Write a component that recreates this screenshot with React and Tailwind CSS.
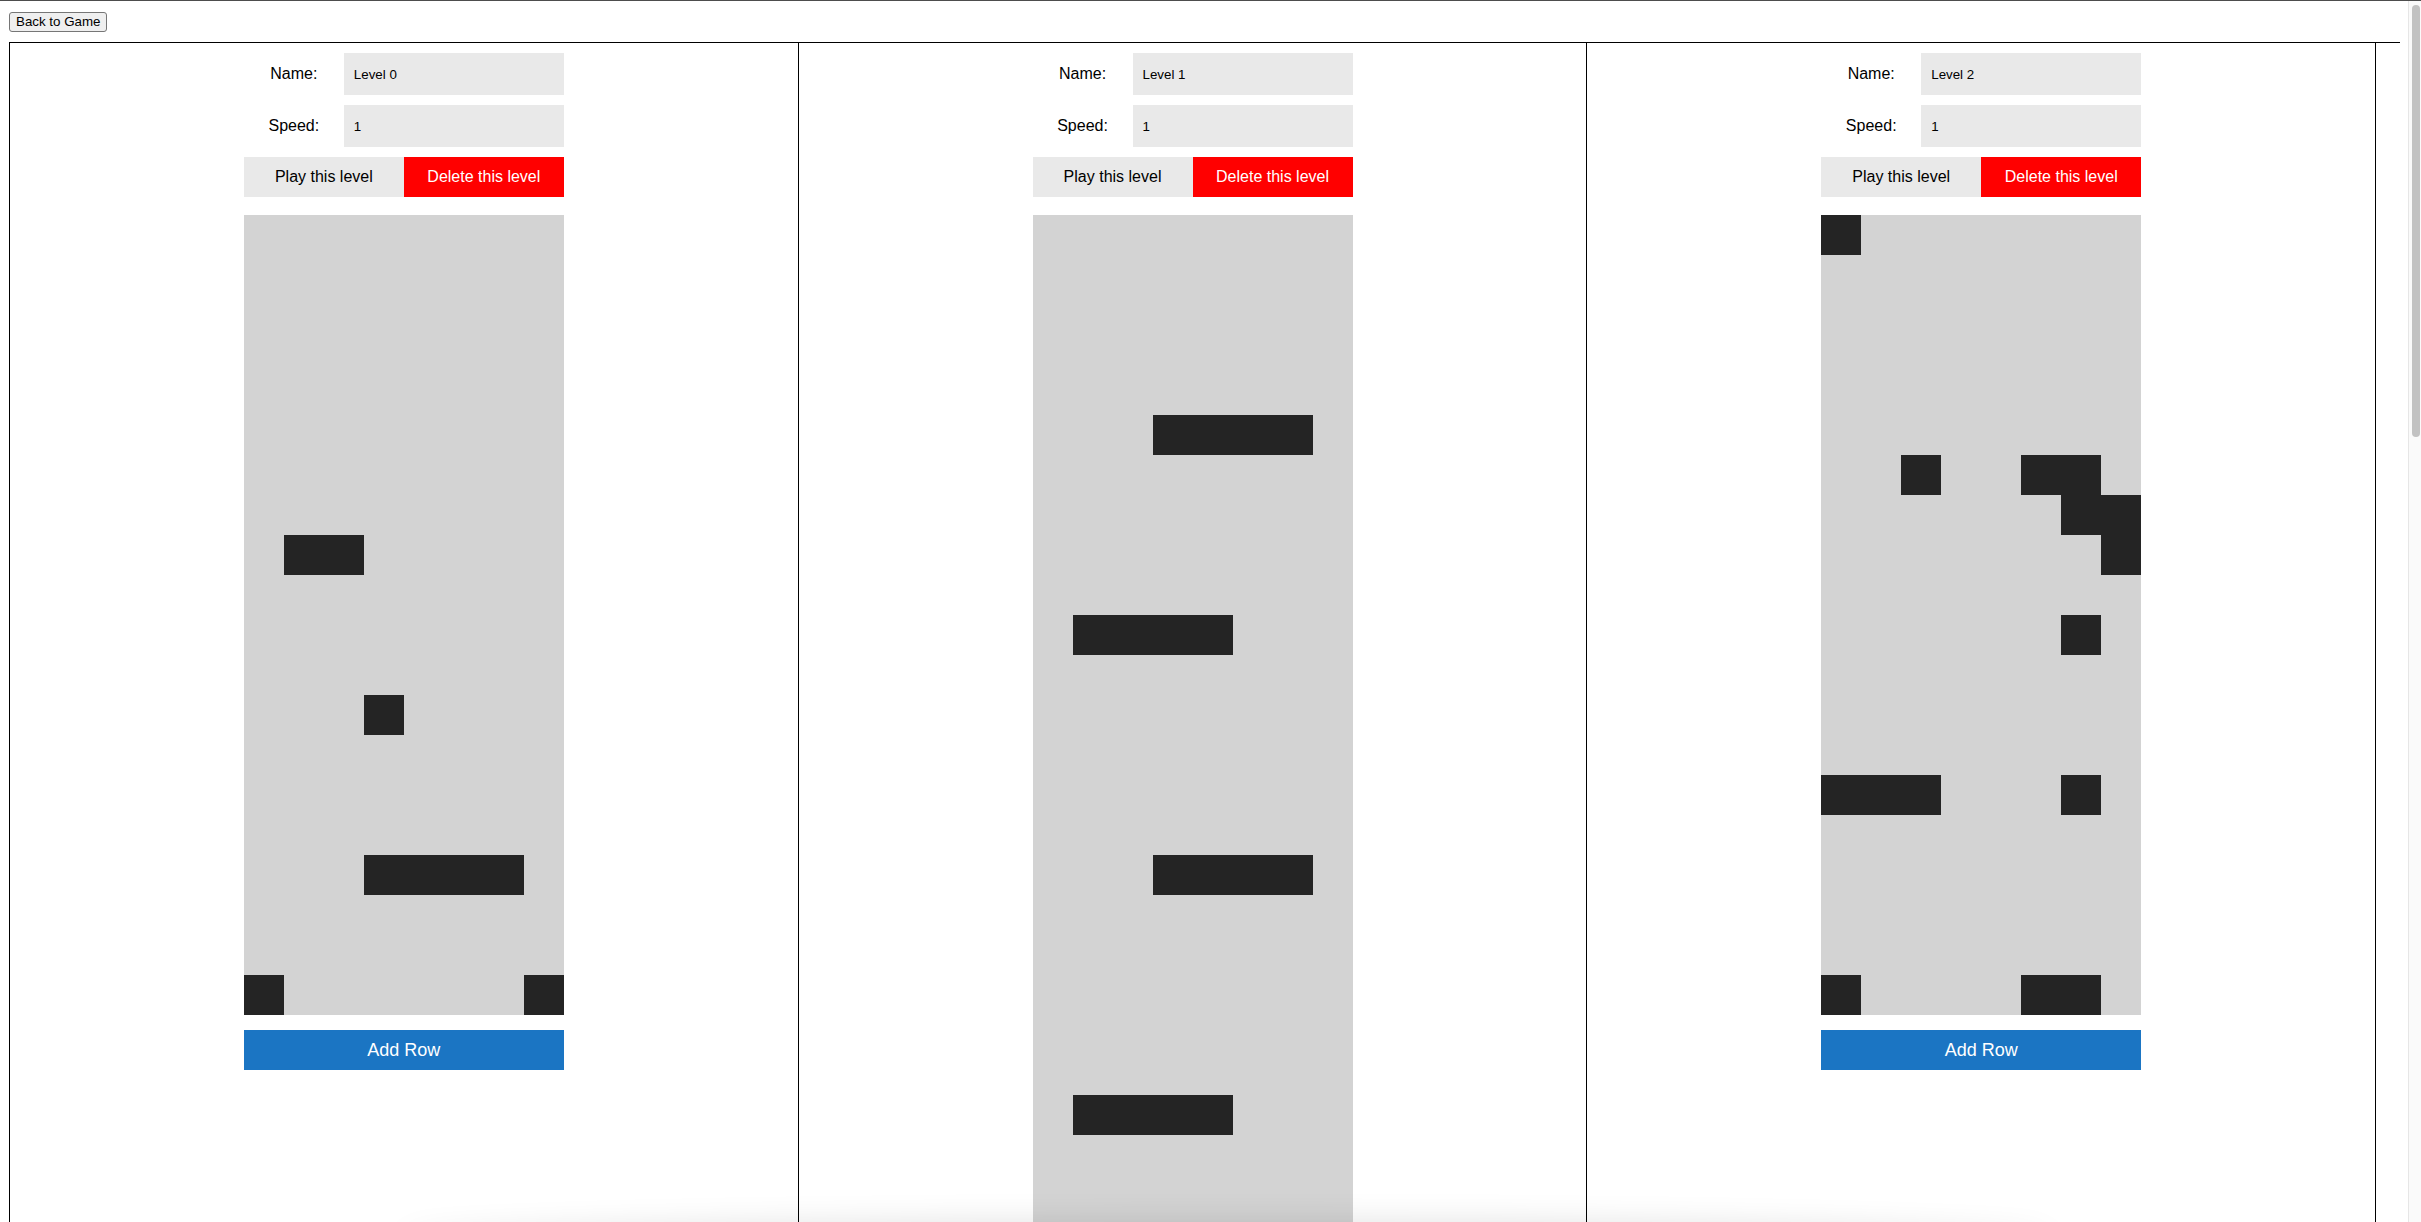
import { useState } from 'react';

// '#' = wall block, '.' = empty cell
const level1Rows = () => {
  const rows = [];
  for (let i = 0; i < 88; i++) {
    if (i === 5 || i === 16 || i === 28 || i === 40 || i === 52 || i === 64 || i === 76) rows.push('...####.');
    else if (i === 10 || i === 22 || i === 34 || i === 46 || i === 58 || i === 70 || i === 82) rows.push('.####...');
    else rows.push('........');
  }
  return rows;
};

const initialLevels = [
  {
    name: 'Level 0',
    speed: '1',
    rows: [
      '........', '........', '........', '........', '........',
      '........', '........', '........', '.##.....', '........',
      '........', '........', '...#....', '........', '........',
      '........', '...####.', '........', '........', '#......#',
    ],
  },
  { name: 'Level 1', speed: '1', rows: level1Rows() },
  {
    name: 'Level 2',
    speed: '1',
    rows: [
      '#.......', '........', '........', '........', '........',
      '........', '..#..##.', '......##', '.......#', '........',
      '......#.', '........', '........', '........', '###...#.',
      '........', '........', '........', '........', '#....##.',
    ],
  },
];

const LevelEditor = ({ level }) => (
  <div className="w-[33%] shrink-0 border-r border-black flex flex-col items-center pt-[10px] pb-[10px]">
    <div className="w-[320px] flex flex-col gap-[10px]">
      <div className="flex items-center">
        <label className="w-[100px] text-center text-[16px]">Name:</label>
        <input
          defaultValue={level.name}
          className="w-[220px] h-[42px] bg-[#e9e9e9] px-[10px] text-[13.33px] outline-none"
        />
      </div>
      <div className="flex items-center">
        <label className="w-[100px] text-center text-[16px]">Speed:</label>
        <input
          defaultValue={level.speed}
          className="w-[220px] h-[42px] bg-[#e9e9e9] px-[10px] text-[13.33px] outline-none"
        />
      </div>
      <div className="flex">
        <button className="w-[160px] h-[40px] bg-[#e9e9e9] text-[16px]">Play this level</button>
        <button className="w-[160px] h-[40px] bg-[#ff0000] text-white text-[16px]">Delete this level</button>
      </div>
    </div>

    {/* Level grid */}
    <div className="mt-[18px] w-[320px] bg-[#d3d3d3]">
      {level.rows.map((row, r) => (
        <div key={r} className="flex">
          {row.split('').map((c, i) => (
            <div key={i} className={c === '#' ? 'w-[40px] h-[40px] bg-[#242424]' : 'w-[40px] h-[40px]'} />
          ))}
        </div>
      ))}
    </div>

    <button className="mt-[15px] w-[320px] h-[40px] bg-[#1b75c3] text-white text-[18px]">Add Row</button>
  </div>
);

const App = () => {
  const [levels] = useState(initialLevels);

  return (
    <div className="flex h-screen border-t border-[#4d4d4d] bg-white text-black font-['Liberation_Sans',Arial,sans-serif]">
      <div className="flex-1 min-w-0 overflow-y-auto [scrollbar-width:none]">
        <div className="pl-[9px] pr-2 pt-[11px] pb-2">
          <button className="block h-[20px] px-[6px] text-[13.33px] bg-[#efefef] border border-[#767676] rounded-[3px] leading-none">
            Back to Game
          </button>
          <div className="mt-[10px] flex border-l border-t border-black">
            {levels.map((level) => (
              <LevelEditor key={level.name} level={level} />
            ))}
          </div>
        </div>
      </div>

      {/* scrollbar */}
      <div className="w-[13px] shrink-0 border-l border-[#e6e6e6] bg-[#fafafa] pl-[3px] pr-[1px] pt-[4px]">
        <div className="h-[432px] w-[8px] rounded-full bg-[#c2c2c2]" />
      </div>

      {/* soft shadow from the bottom bar */}
      <div className="fixed left-[400px] right-[366px] bottom-[-40px] h-[40px] rounded-[50%] shadow-[0_0_32px_rgba(0,0,0,0.12)] pointer-events-none" />
    </div>
  );
};

export default App;
